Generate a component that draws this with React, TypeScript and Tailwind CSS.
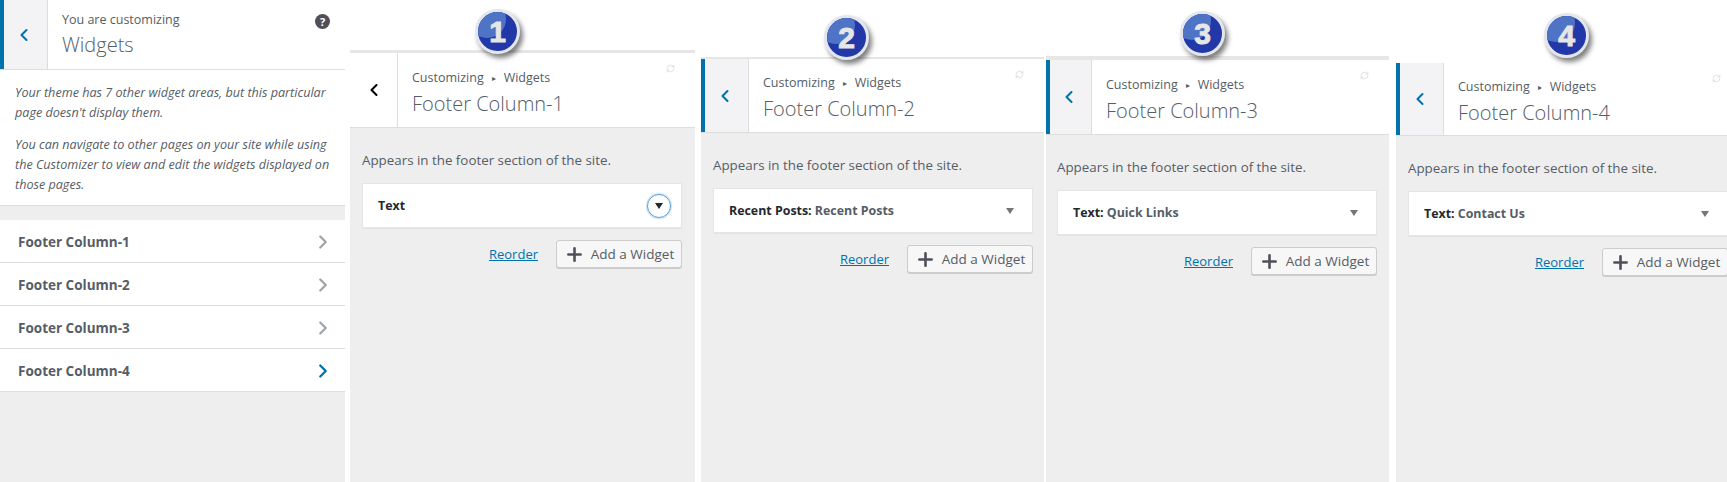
import { ChevronLeft, ChevronRight, Plus, RefreshCw } from "lucide-react";

const font = "font-['Open_Sans',sans-serif]";

function Badge({ n, className }: { n: string; className: string }) {
  return (
    <div
      className={`absolute z-10 flex h-[45px] w-[45px] items-center justify-center overflow-hidden rounded-full border-[3px] border-[#e4e6ee] bg-[#2238a8] shadow-[3px_4px_5px_rgba(0,0,0,0.5)] ${className}`}
    >
      <div className="absolute -left-[10px] -top-[12px] h-[38px] w-[38px] rounded-full bg-[#4f74c6]" />
      <span className="relative font-['Liberation_Sans',sans-serif] text-[30px] font-bold leading-none text-[#e6e6e6] [-webkit-text-stroke:1px_#e6e6e6]">
        {n}
      </span>
    </div>
  );
}

function WidgetPanel({
  name,
  label,
  title,
  wrapClass,
  stripClass,
  headerClass,
  backClass,
  bodyClass,
  focused,
}: {
  name: string;
  label: string;
  title?: string;
  wrapClass: string;
  stripClass: string;
  headerClass: string;
  backClass: string;
  bodyClass: string;
  focused?: boolean;
}) {
  return (
    <section className={`flex shrink-0 flex-col bg-[#eeeeee] ${wrapClass}`}>
      <div className={`bg-[#e6e6e6] ${stripClass}`} />
      <header className={`flex border-b border-[#dddddd] bg-white ${headerClass}`}>
        {focused ? (
          <div className={`flex shrink-0 items-center justify-center border-r border-[#dddddd] text-black ${backClass}`}>
            <ChevronLeft size={20} strokeWidth={2.5} />
          </div>
        ) : (
          <div className={`flex shrink-0 items-center justify-center border-l-4 border-r border-l-[#0073aa] border-r-[#dddddd] bg-[#f3f3f5] pr-[4px] text-[#0073aa] ${backClass}`}>
            <ChevronLeft size={20} strokeWidth={2.5} />
          </div>
        )}
        <div className="relative flex flex-1 flex-col justify-center pl-[14px] pt-[5px] text-[#555d66]">
          <div className="flex items-center text-[12.5px] leading-[20px]">
            Customizing
            <span className="mx-[8px] text-[8px] leading-none">▸</span>
            Widgets
          </div>
          <div className="mt-[2px] text-[20px] font-light leading-[28px]">{name}</div>
          <RefreshCw size={9} className="absolute right-[20px] top-[11px] text-[#d8d8d8]" />
        </div>
      </header>
      <div className={`w-[320px] self-start pt-[22px] ${bodyClass}`}>
        <p className="text-[13.35px] leading-[20px] text-[#555d66]">Appears in the footer section of the site.</p>
        <div className="mt-[13px] flex h-[45px] items-center justify-between border border-[#e5e5e5] bg-white pl-[15px] pr-[10px] shadow-[0_1px_1px_rgba(0,0,0,0.04)]">
          <div className="pt-[2px] text-[12.4px] font-bold text-[#23282d]">
            {label}
            {title ? <span className="text-[#555d66]"> {title}</span> : null}
          </div>
          {focused ? (
            <div className="flex h-[24px] w-[24px] items-center justify-center rounded-full border border-[#5b9dd9] shadow-[0_0_2px_rgba(30,140,190,0.8)]">
              <span className="h-0 w-0 border-x-4 border-t-[6px] border-x-transparent border-t-[#23282d]" />
            </div>
          ) : (
            <span className="mr-[8px] h-0 w-0 border-x-4 border-t-[6px] border-x-transparent border-t-[#72777c]" />
          )}
        </div>
        <div className="mt-[12px] flex items-center justify-end">
          <a className="mr-[18px] pt-[1px] text-[13px] text-[#0073aa] underline">Reorder</a>
          <button className="flex h-[28px] w-[126px] items-center justify-center gap-[6px] rounded-[3px] border border-[#cccccc] bg-[#f7f7f7] pt-[1px] text-[13.5px] text-[#555d66] shadow-[0_1px_0_#cccccc]">
            <Plus size={21} strokeWidth={3} className="text-[#50505a]" />
            Add a Widget
          </button>
        </div>
      </div>
    </section>
  );
}

function AreaRow({ name, active }: { name: string; active?: boolean }) {
  return (
    <div className="flex h-[43px] items-center justify-between border-b border-[#dddddd] bg-white pl-[18px] pr-[11px] pt-[2px]">
      <span className="text-[13.5px] font-bold text-[#555d66]">{name}</span>
      {active ? (
        <ChevronRight size={22} strokeWidth={2.5} className="text-[#0073aa]" />
      ) : (
        <ChevronRight size={22} strokeWidth={2.5} className="text-[#a0a5aa]" />
      )}
    </div>
  );
}

export default function App() {
  return (
    <div className={`relative flex h-[482px] w-[1727px] overflow-hidden bg-white ${font}`}>
      <aside className="flex w-[345px] shrink-0 flex-col bg-[#eeeeee]">
        <header className="flex h-[70px] border-b border-[#dddddd] bg-white">
          <div className="flex w-[48px] shrink-0 items-center justify-center border-l-4 border-r border-l-[#0073aa] border-r-[#dddddd] bg-[#f3f3f5] pr-[4px] text-[#0073aa]">
            <ChevronLeft size={20} strokeWidth={2.5} />
          </div>
          <div className="relative flex flex-1 flex-col justify-center pl-[14px] text-[#555d66]">
            <div className="text-[12.5px] leading-[20px]">You are customizing</div>
            <div className="mt-[1px] text-[20px] font-light leading-[28px]">Widgets</div>
            <div className="absolute right-[15px] top-[14px] flex h-[15px] w-[15px] items-center justify-center rounded-full bg-[#50505a] text-[11px] font-bold leading-none text-white">
              ?
            </div>
          </div>
        </header>
        <div className="h-[136px] whitespace-nowrap border-b border-[#dddddd] bg-white pl-[15px] pt-[13px] text-[12.6px] italic leading-[20px] text-[#555d66]">
          <p>
            Your theme has 7 other widget areas, but this particular
            <br />
            page doesn't display them.
          </p>
          <p className="mt-[12px]">
            You can navigate to other pages on your site while using
            <br />
            the Customizer to view and edit the widgets displayed on
            <br />
            those pages.
          </p>
        </div>
        <div className="mt-[14px]">
          <AreaRow name="Footer Column-1" />
          <AreaRow name="Footer Column-2" />
          <AreaRow name="Footer Column-3" />
          <AreaRow name="Footer Column-4" active />
        </div>
      </aside>

      <WidgetPanel
        name="Footer Column-1"
        label="Text"
        focused
        wrapClass="ml-[5px] mt-[50px] w-[345px]"
        stripClass="h-[3px]"
        headerClass="h-[75px]"
        backClass="w-[48px]"
        bodyClass="ml-[12px]"
      />
      <WidgetPanel
        name="Footer Column-2"
        label="Recent Posts:"
        title="Recent Posts"
        wrapClass="ml-[6px] mt-[57px] w-[343px]"
        stripClass="h-[2px]"
        headerClass="h-[74px]"
        backClass="w-[48px]"
        bodyClass="ml-[12px]"
      />
      <WidgetPanel
        name="Footer Column-3"
        label="Text:"
        title="Quick Links"
        wrapClass="ml-[2px] mt-[56px] w-[343px]"
        stripClass="h-[4px]"
        headerClass="h-[75px]"
        backClass="w-[46px]"
        bodyClass="ml-[11px]"
      />
      <WidgetPanel
        name="Footer Column-4"
        label="Text:"
        title="Contact Us"
        wrapClass="ml-[7px] mt-[63px] w-[345px]"
        stripClass="h-0"
        headerClass="h-[73px]"
        backClass="w-[48px]"
        bodyClass="ml-[12px]"
      />

      <Badge n="1" className="left-[475px] top-[9px]" />
      <Badge n="2" className="left-[824px] top-[15px]" />
      <Badge n="3" className="left-[1180px] top-[11px]" />
      <Badge n="4" className="left-[1544px] top-[13px]" />
    </div>
  );
}
